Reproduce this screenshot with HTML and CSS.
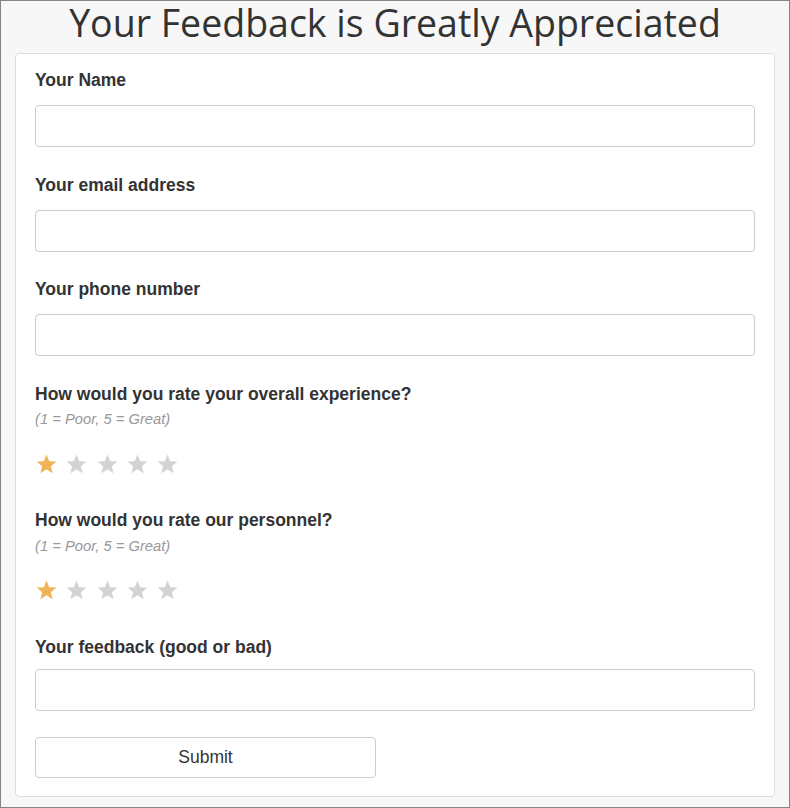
FILE: index.html
```html
<!DOCTYPE html>
<html>
<head>
<meta charset="utf-8">
<link rel="stylesheet" href="styles.css">
</head>
<body>
<div class="frame">
  <h1 class="title">Your Feedback is Greatly Appreciated</h1>
  <form class="panel">
    <div class="group">
      <label class="label">Your Name</label>
      <input class="field" type="text">
    </div>
    <div class="group">
      <label class="label">Your email address</label>
      <input class="field" type="text">
    </div>
    <div class="group">
      <label class="label">Your phone number</label>
      <input class="field" type="text">
    </div>
    <div class="group rating">
      <label class="label">How would you rate your overall experience?</label>
      <div class="hint">(1 = Poor, 5 = Great)</div>
      <div class="stars">
        <svg class="star on" viewBox="0 0 24 23"><polygon points="12,0.5 15.1,8.2 23.4,8.7 17,14 19.1,22.1 12,17.6 4.9,22.1 7,14 0.6,8.7 8.9,8.2"/></svg>
        <svg class="star" viewBox="0 0 24 23"><polygon points="12,0.5 15.1,8.2 23.4,8.7 17,14 19.1,22.1 12,17.6 4.9,22.1 7,14 0.6,8.7 8.9,8.2"/></svg>
        <svg class="star" viewBox="0 0 24 23"><polygon points="12,0.5 15.1,8.2 23.4,8.7 17,14 19.1,22.1 12,17.6 4.9,22.1 7,14 0.6,8.7 8.9,8.2"/></svg>
        <svg class="star" viewBox="0 0 24 23"><polygon points="12,0.5 15.1,8.2 23.4,8.7 17,14 19.1,22.1 12,17.6 4.9,22.1 7,14 0.6,8.7 8.9,8.2"/></svg>
        <svg class="star" viewBox="0 0 24 23"><polygon points="12,0.5 15.1,8.2 23.4,8.7 17,14 19.1,22.1 12,17.6 4.9,22.1 7,14 0.6,8.7 8.9,8.2"/></svg>
      </div>
    </div>
    <div class="group rating">
      <label class="label">How would you rate our personnel?</label>
      <div class="hint">(1 = Poor, 5 = Great)</div>
      <div class="stars">
        <svg class="star on" viewBox="0 0 24 23"><polygon points="12,0.5 15.1,8.2 23.4,8.7 17,14 19.1,22.1 12,17.6 4.9,22.1 7,14 0.6,8.7 8.9,8.2"/></svg>
        <svg class="star" viewBox="0 0 24 23"><polygon points="12,0.5 15.1,8.2 23.4,8.7 17,14 19.1,22.1 12,17.6 4.9,22.1 7,14 0.6,8.7 8.9,8.2"/></svg>
        <svg class="star" viewBox="0 0 24 23"><polygon points="12,0.5 15.1,8.2 23.4,8.7 17,14 19.1,22.1 12,17.6 4.9,22.1 7,14 0.6,8.7 8.9,8.2"/></svg>
        <svg class="star" viewBox="0 0 24 23"><polygon points="12,0.5 15.1,8.2 23.4,8.7 17,14 19.1,22.1 12,17.6 4.9,22.1 7,14 0.6,8.7 8.9,8.2"/></svg>
        <svg class="star" viewBox="0 0 24 23"><polygon points="12,0.5 15.1,8.2 23.4,8.7 17,14 19.1,22.1 12,17.6 4.9,22.1 7,14 0.6,8.7 8.9,8.2"/></svg>
      </div>
    </div>
    <div class="group last">
      <label class="label">Your feedback (good or bad)</label>
      <input class="field" type="text">
    </div>
    <button class="submit" type="button">Submit</button>
  </form>
</div>
</body>
</html>
```
FILE: styles.css
```css
html, body {
  margin: 0;
  padding: 0;
}
body {
  background: #f7f7f7;
  font-family: "Liberation Sans", Arial, sans-serif;
  color: #333;
}
.frame {
  box-sizing: border-box;
  width: 790px;
  height: 808px;
  border: 1px solid #858585;
  background: #f7f7f7;
}
.title {
  margin: 0 0 9px;
  padding: 0;
  font-family: "Open Sans", sans-serif;
  font-weight: 400;
  font-size: 37.5px;
  line-height: 43px;
  text-align: center;
  color: #333;
}
.panel {
  margin: 0 14px;
  background: #fff;
  border: 1px solid #ddd;
  border-radius: 4px;
  padding: 16px 19px 18px;
}
.group {
  margin-bottom: 27.5px;
}
.label {
  display: block;
  font-weight: 700;
  font-size: 17.5px;
  line-height: 20px;
  margin-bottom: 15px;
}
.field {
  display: block;
  box-sizing: border-box;
  width: 100%;
  height: 42px;
  margin: 0;
  border: 1px solid #ccc;
  border-radius: 4px;
  background: #fff;
}
.rating .label {
  margin-bottom: 5.5px;
}
.hint {
  font-size: 14.75px;
  line-height: 20px;
  font-style: italic;
  color: #999;
  margin-bottom: 24.5px;
}
.stars {
  display: flex;
  gap: 9.3px;
  height: 20px;
  padding-left: 1px;
  margin-bottom: 36.75px;
}
.group.rating {
  margin-bottom: 0;
}
.star {
  width: 21px;
  height: 20px;
  fill: #d3d3d3;
}
.star.on {
  fill: #f0b35a;
}
.group.last {
  margin-bottom: 26px;
}
.group.last .label {
  margin-bottom: 12px;
}
.submit {
  display: block;
  box-sizing: border-box;
  width: 341px;
  height: 41px;
  margin: 0;
  border: 1px solid #ccc;
  border-radius: 4px;
  background: #fff;
  font-family: "Liberation Sans", Arial, sans-serif;
  font-size: 17.5px;
  color: #333;
}
```
